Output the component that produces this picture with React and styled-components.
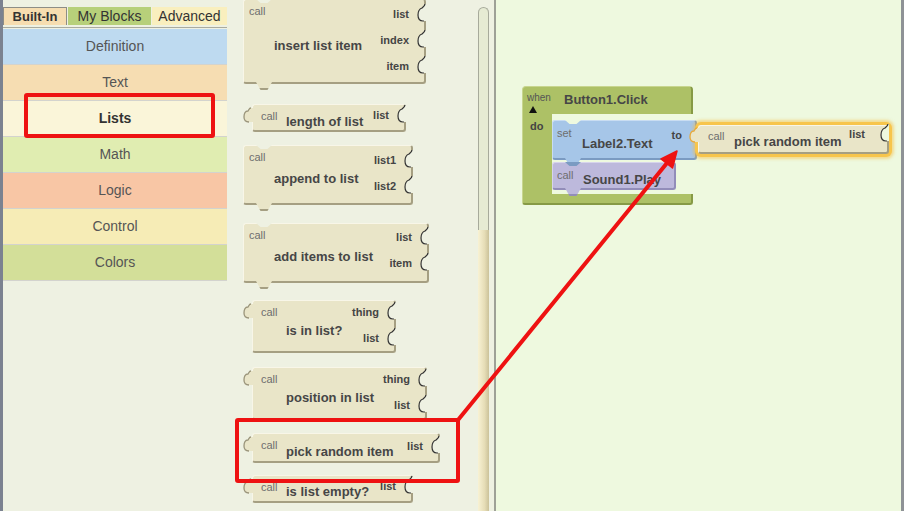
import React from 'react';
import styled, { createGlobalStyle, css } from 'styled-components';

const PANE = '#eef1e2';
const CANVAS = '#eef9df';

const beige = { bg: '#e9e5c8', light: '#f8f6e8', dark: '#a59f82' };
const blue = { bg: '#a6c6e8', light: '#c9ddf2', dark: '#7b9bc2' };
const purple = { bg: '#bdb9dc', light: '#d7d4ec', dark: '#928db9' };
const green = { bg: '#adc166', light: '#c8d68f', dark: '#869a45' };

const Global = createGlobalStyle`
  html, body { margin: 0; padding: 0; background: ${PANE}; }
  body { font-family: "Liberation Sans", Arial, sans-serif; }
`;

const Screen = styled.div`
  position: relative;
  display: flex;
  width: 904px;
  height: 511px;
  overflow: hidden;
  font-family: "Liberation Sans", Arial, sans-serif;
`;

/* ---------- left palette ---------- */

const Palette = styled.div`
  width: 225px;
  flex-shrink: 0;
  padding-top: 7px;
  border-left: 3px solid #7b8290;
  background: ${PANE};
`;

const Tabs = styled.div`
  display: flex;
  gap: 1px;
  padding-bottom: 2px;
  margin-right: 1px;
  border-bottom: 1px solid #a9ab9f;
`;

const Tab = styled.div`
  box-sizing: border-box;
  width: ${p => p.$w}px;
  height: 18px;
  line-height: 17px;
  text-align: center;
  color: #333;
  font-size: ${p => (p.$active ? 13 : 14)}px;
  font-weight: ${p => (p.$active ? 700 : 400)};
  background: ${p => p.$bg};
  border: 1px solid ${p => (p.$active ? '#8d8d86' : 'transparent')};
  border-bottom: none;
`;

const Categories = styled.div`
  display: flex;
  flex-direction: column;
  gap: 1px;
  margin: 1px 1px 0 0;
  padding-bottom: 1px;
  background: #d3d3ce;
`;

const Category = styled.div`
  height: 35px;
  line-height: 35px;
  text-align: center;
  font-size: 14px;
  color: ${p => (p.$bold ? '#333' : '#555')};
  font-weight: ${p => (p.$bold ? 700 : 400)};
  background: ${p => p.$bg};
`;

/* ---------- drawer ---------- */

const Drawer = styled.div`
  display: flex;
  width: 266px;
  flex-shrink: 0;
  background: ${PANE};
  border-right: 2px solid #9ea197;
`;

const Column = styled.div`
  width: 235px;
  padding-left: 15px;
  display: flex;
  flex-direction: column;
  align-items: flex-start;
`;

const Track = styled.div`
  width: 9px;
  margin: 7px 5px 0 0;
  display: flex;
  flex-direction: column;
  border: 1px solid #a7aa9b;
  border-bottom: none;
  border-radius: 6px 6px 0 0;
  background: #e6ebd3;
`;

const Thumb = styled.div`
  height: 281px;
  margin: auto -1px 0;
  background: linear-gradient(to right, #f8f2d4, #e6ddb6 60%, #cbc29a);
`;

const BlockRow = styled.div`
  display: flex;
  align-items: flex-start;
  margin-top: ${p => p.$gap}px;
`;

const Piece = styled.div`
  position: relative;
  box-sizing: border-box;
  display: flex;
  flex-shrink: 0;
  width: ${p => p.$w}px;
  height: ${p => p.$h}px;
  background: ${p => p.$c.bg};
  border-top: 1px solid ${p => p.$c.light};
  border-left: 1px solid ${p => p.$c.light};
  border-right: 2px solid ${p => p.$c.dark};
  border-bottom: 2px solid ${p => p.$c.dark};
  border-radius: 3px;
  ${p => p.$stmt && css`
    &::before {
      content: '';
      position: absolute;
      left: 12px;
      top: -1px;
      width: 16px;
      height: 4px;
      background: ${p.$notch};
      clip-path: polygon(0 0, 100% 0, 72% 100%, 28% 100%);
    }
    &::after {
      content: '';
      position: absolute;
      left: 12px;
      bottom: -8px;
      width: 16px;
      height: 8px;
      background: linear-gradient(to bottom, ${p.$c.bg} 0 6px, ${p.$c.dark} 6px);
      clip-path: polygon(0 0, 100% 0, 72% 100%, 28% 100%);
    }
  `}
  ${p => p.$glow && css`
    box-shadow: 0 0 0 3px #f7c54c, 0 0 3px 5px rgba(246, 188, 64, 0.5);
  `}
`;

const Main = styled.div`
  flex: 1;
  display: flex;
  flex-direction: column;
  align-items: flex-start;
  padding: ${p => p.$pt}px 0 0 ${p => p.$pl}px;
  white-space: nowrap;
`;

const Call = styled.div`
  font-size: 11px;
  line-height: 14px;
  color: #6e6e6e;
`;

const Title = styled.div`
  font-size: 13px;
  line-height: 16px;
  font-weight: 700;
  color: #464646;
  margin: ${p => p.$mt}px 0 0 ${p => p.$ml}px;
`;

const Sockets = styled.div`
  display: flex;
  flex-direction: column;
  margin-top: ${p => p.$mt}px;
`;

const SocketRow = styled.div`
  height: 26px;
  display: flex;
  align-items: center;
  justify-content: flex-end;
`;

const SockLabel = styled.span`
  font-size: 11px;
  font-weight: 700;
  color: #444;
  margin-right: ${p => p.$mr ?? 7}px;
`;

const SocketIcon = styled.svg`
  flex-shrink: 0;
  margin-right: -2px;
  position: relative;
  z-index: 1;
`;

const Socket = ({ bg }) => (
  <SocketIcon width="10" height="20" viewBox="0 0 10 20">
    <path d="M10 0 L9 0 C9 2 7 3 6 4 C3 5 2 8 2 11 C2 15 4 17 7 17 L10 17 Z" fill={bg} />
    <path d="M9 0 C9 2 7 3 6 4 C3 5 2 8 2 11 C2 15 4 17 7 17 L8 17" fill="none" stroke="#333" strokeWidth="1.2" />
  </SocketIcon>
);

const PlugIcon = styled.svg`
  flex-shrink: 0;
  margin: ${p => p.$mt}px -1px 0 0;
  position: relative;
  z-index: 2;
`;

const Plug = ({ c, stroke, mt = 3 }) => (
  <PlugIcon $mt={mt} width="10" height="18" viewBox="0 0 10 18">
    <path d="M10 1 L8 1 C6 1 6 3 5 4 C2 4 1 7 1 10 C1 13 3 15 6 15 L10 15 Z" fill={c.bg} />
    <path d="M8 1 C6 1 6 3 5 4 C2 4 1 7 1 10 C1 13 3 15 6 15" fill="none" stroke={stroke} strokeWidth="1.3" />
  </PlugIcon>
);

const drawerBlocks = [
  { title: 'insert list item', sockets: ['list', 'index', 'item'], w: 183, h: 85, stmt: true, gap: -1, cy: 47, st: 1 },
  { title: 'length of list', sockets: ['list'], w: 154, h: 28, plug: true, gap: 20, cy: 18, st: -3 },
  { title: 'append to list', sockets: ['list1', 'list2'], w: 170, h: 60, stmt: true, gap: 13, cy: 34, st: 1 },
  { title: 'add items to list', sockets: ['list', 'item'], w: 186, h: 60, stmt: true, gap: 18, cy: 34, st: 0 },
  { title: 'is in list?', sockets: ['thing', 'list'], w: 144, h: 53, plug: true, gap: 17, cy: 31, st: -2 },
  { title: 'position in list', sockets: ['thing', 'list'], w: 175, h: 53, plug: true, gap: 14, cy: 31, st: -2 },
  { title: 'pick random item', sockets: ['list'], w: 188, h: 30, plug: true, gap: 13, cy: 19, st: -1 },
  { title: 'is list empty?', sockets: ['list'], w: 161, h: 28, plug: true, gap: 12, cy: 17, st: -3 },
];

const DrawerBlock = ({ b }) => (
  <BlockRow $gap={b.gap}>
    {b.plug && <Plug c={beige} stroke="#9a947a" />}
    <Piece $w={b.w} $h={b.h} $c={beige} $stmt={b.stmt} $notch={PANE}>
      <Main $pl={b.plug ? 8 : 5} $pt={4}>
        <Call>call</Call>
        <Title $mt={b.cy - 27} $ml={25}>{b.title}</Title>
      </Main>
      <Sockets $mt={b.st}>
        {b.sockets.map(s => (
          <SocketRow key={s}>
            <SockLabel>{s}</SockLabel>
            <Socket bg={PANE} />
          </SocketRow>
        ))}
      </Sockets>
    </Piece>
  </BlockRow>
);

/* ---------- workspace ---------- */

const Canvas = styled.div`
  position: relative;
  flex: 1;
  background: ${CANVAS};
  border-right: 3px solid #8e9296;
`;

const EventBlock = styled.div`
  position: absolute;
  left: 26px;
  top: 86px;
  width: 171px;
  display: flex;
  flex-direction: column;
`;

const EventHead = styled.div`
  box-sizing: border-box;
  height: 28px;
  display: flex;
  align-items: flex-start;
  padding: 5px 0 0 4px;
  background: ${green.bg};
  border: 1px solid ${green.light};
  border-right: 2px solid ${green.dark};
  border-bottom: none;
  border-radius: 4px 4px 0 0;
`;

const WhenCol = styled.div`
  display: flex;
  flex-direction: column;
  width: 24px;
`;

const When = styled.span`
  font-size: 10px;
  line-height: 11px;
  color: #555;
`;

const Caret = styled.div`
  width: 0;
  height: 0;
  margin: 3px 0 0 2px;
  border-left: 4px solid transparent;
  border-right: 4px solid transparent;
  border-bottom: 7px solid #111;
`;

const EventName = styled.span`
  margin-left: 13px;
  font-size: 13px;
  line-height: 16px;
  font-weight: 700;
  color: #464646;
`;

const EventBody = styled.div`
  display: flex;
`;

const Arm = styled.div`
  box-sizing: border-box;
  flex-shrink: 0;
  width: 30px;
  padding: 5px 0 0 7px;
  background: ${green.bg};
  border-left: 1px solid ${green.light};
  font-size: 11px;
  line-height: 14px;
  font-weight: 700;
  color: #444;
`;

const Mouth = styled.div`
  flex-shrink: 0;
  display: flex;
  flex-direction: column;
  align-items: flex-start;
  gap: 2px;
  padding: 6px 0 4px;
`;

const EventFoot = styled.div`
  box-sizing: border-box;
  height: 11px;
  background: ${green.bg};
  border-left: 1px solid ${green.light};
  border-right: 2px solid ${green.dark};
  border-bottom: 2px solid ${green.dark};
  border-radius: 0 0 3px 3px;
`;

const SetRow = styled.div`
  display: flex;
  align-items: flex-start;
`;

const ToLabel = styled.span`
  margin: 8px 13px 0 0;
  font-size: 11px;
  font-weight: 700;
  color: #444;
`;

const Attached = styled.div`
  display: flex;
  align-items: flex-start;
  margin: 5px 0 0 -8px;
`;

const Workspace = () => (
  <Canvas>
    <EventBlock>
      <EventHead>
        <WhenCol>
          <When>when</When>
          <Caret />
        </WhenCol>
        <EventName>Button1.Click</EventName>
      </EventHead>
      <EventBody>
        <Arm>do</Arm>
        <Mouth>
          <SetRow>
            <Piece $w={145} $h={40} $c={blue} $stmt $notch={CANVAS}>
              <Main $pl={4} $pt={5}>
                <Call>set</Call>
                <Title $mt={-4} $ml={25}>Label2.Text</Title>
              </Main>
              <ToLabel>to</ToLabel>
            </Piece>
            <Attached>
              <Plug c={beige} stroke="#e8a93a" mt={2} />
              <Piece $w={191} $h={29} $c={beige} $glow>
                <Main $pl={9} $pt={3}>
                  <Call>call</Call>
                  <Title $mt={-9} $ml={26}>pick random item</Title>
                </Main>
                <Sockets $mt={-5}>
                  <SocketRow>
                    <SockLabel $mr={14}>list</SockLabel>
                    <Socket bg={CANVAS} />
                  </SocketRow>
                </Sockets>
              </Piece>
            </Attached>
          </SetRow>
          <Piece $w={124} $h={28} $c={purple} $stmt $notch={blue.dark}>
            <Main $pl={4} $pt={5}>
              <Call>call</Call>
              <Title $mt={-10} $ml={26}>Sound1.Play</Title>
            </Main>
          </Piece>
        </Mouth>
      </EventBody>
      <EventFoot />
    </EventBlock>
  </Canvas>
);

/* ---------- annotations ---------- */

const Overlay = styled.svg`
  position: absolute;
  left: 0;
  top: 0;
  pointer-events: none;
  z-index: 10;
`;

const Annotations = () => (
  <Overlay width="904" height="511" viewBox="0 0 904 511">
    <g fill="none" stroke="#ee1212" strokeWidth="4">
      <rect x="26" y="95" width="187" height="41" rx="1" />
      <rect x="237" y="420" width="221" height="61" rx="1" />
      <line x1="458" y1="420" x2="667" y2="163" strokeLinecap="round" />
    </g>
    <polygon points="677,151 672.5,168 661,159" fill="#ee1212" stroke="#ee1212" strokeWidth="1.5" strokeLinejoin="round" />
  </Overlay>
);

const categories = [
  ['Definition', '#bedaf0'],
  ['Text', '#f6ddb2'],
  ['Lists', '#faf5d9', true],
  ['Math', '#e0edb1'],
  ['Logic', '#f8c6a5'],
  ['Control', '#f6ecb6'],
  ['Colors', '#d3df99'],
];

export default function App() {
  return (
    <Screen>
      <Global />
      <Palette>
        <Tabs>
          <Tab $w={64} $bg="#f6ddb0" $active>Built-In</Tab>
          <Tab $w={83} $bg="#b7d07a">My Blocks</Tab>
          <Tab $w={75} $bg="#f9efbe">Advanced</Tab>
        </Tabs>
        <Categories>
          {categories.map(([name, bg, bold]) => (
            <Category key={name} $bg={bg} $bold={bold}>{name}</Category>
          ))}
        </Categories>
      </Palette>
      <Drawer>
        <Column>
          {drawerBlocks.map(b => <DrawerBlock key={b.title} b={b} />)}
        </Column>
        <Track>
          <Thumb />
        </Track>
      </Drawer>
      <Workspace />
      <Annotations />
    </Screen>
  );
}
